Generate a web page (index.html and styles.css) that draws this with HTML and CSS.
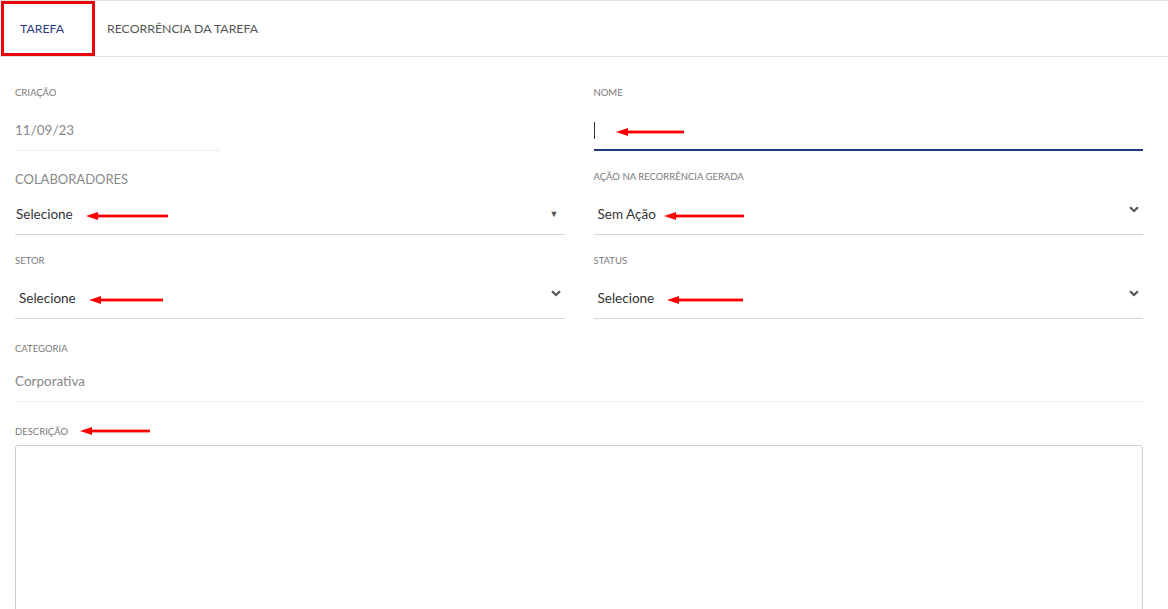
FILE: index.html
```html
<!DOCTYPE html>
<html lang="pt-BR">
<head>
<meta charset="UTF-8">
<title>Tarefa</title>
<link rel="stylesheet" href="styles.css">
</head>
<body>

<div class="tabs">
    <div class="tab active">TAREFA</div>
    <div class="tab">RECORRÊNCIA DA TAREFA</div>
</div>

<form class="form">
    <div class="field">
        <label class="label">CRIAÇÃO</label>
        <div class="control static short">11/09/23</div>
    </div>
    <div class="field">
        <label class="label">NOME</label>
        <div class="control focused">
            <span class="caret"></span>
            <svg class="mark" width="68" height="10" viewBox="0 0 68 10"><path d="M0 5 L12 1 L12 9 Z" fill="#f00"/><rect x="10" y="3.6" width="58" height="2.8" fill="#f00"/></svg>
        </div>
    </div>

    <div class="field">
        <label class="label big">COLABORADORES</label>
        <div class="control select">
            <span class="value">Selecione</span>
            <svg class="mark" width="82" height="10" viewBox="0 0 82 10"><path d="M0 5 L12 1 L12 9 Z" fill="#f00"/><rect x="10" y="3.6" width="72" height="2.8" fill="#f00"/></svg>
            <span class="tri">▼</span>
        </div>
    </div>
    <div class="field">
        <label class="label">AÇÃO NA RECORRÊNCIA GERADA</label>
        <div class="control select indent">
            <span class="value">Sem Ação</span>
            <svg class="mark near" width="80" height="10" viewBox="0 0 80 10"><path d="M0 5 L12 1 L12 9 Z" fill="#f00"/><rect x="10" y="3.6" width="70" height="2.8" fill="#f00"/></svg>
            <svg class="chev" width="10" height="7" viewBox="0 0 10 7"><path d="M1 1.2 L5 5 L9 1.2" fill="none" stroke="#555" stroke-width="2.2"/></svg>
        </div>
    </div>

    <div class="field">
        <label class="label">SETOR</label>
        <div class="control select indent">
            <span class="value">Selecione</span>
            <svg class="mark" width="74" height="10" viewBox="0 0 74 10"><path d="M0 5 L12 1 L12 9 Z" fill="#f00"/><rect x="10" y="3.6" width="64" height="2.8" fill="#f00"/></svg>
            <svg class="chev" width="10" height="7" viewBox="0 0 10 7"><path d="M1 1.2 L5 5 L9 1.2" fill="none" stroke="#555" stroke-width="2.2"/></svg>
        </div>
    </div>
    <div class="field">
        <label class="label">STATUS</label>
        <div class="control select indent">
            <span class="value">Selecione</span>
            <svg class="mark" width="76" height="10" viewBox="0 0 76 10"><path d="M0 5 L12 1 L12 9 Z" fill="#f00"/><rect x="10" y="3.6" width="66" height="2.8" fill="#f00"/></svg>
            <svg class="chev" width="10" height="7" viewBox="0 0 10 7"><path d="M1 1.2 L5 5 L9 1.2" fill="none" stroke="#555" stroke-width="2.2"/></svg>
        </div>
    </div>

    <div class="field wide category">
        <label class="label">CATEGORIA</label>
        <div class="control static">Corporativa</div>
    </div>

    <div class="field wide description">
        <label class="label">DESCRIÇÃO
            <svg class="mark" width="70" height="10" viewBox="0 0 70 10"><path d="M0 5 L12 1 L12 9 Z" fill="#f00"/><rect x="10" y="3.6" width="60" height="2.8" fill="#f00"/></svg>
        </label>
        <textarea class="textarea"></textarea>
    </div>
</form>

</body>
</html>
```

FILE: styles.css
```css
    :root {
        --line: #d4d4d4;
        --line-soft: #ececec;
        --label: #7a7a7a;
        --text: #333;
        --primary: #1f3b7c;
    }

    body {
        margin: 0;
        background: #fff;
        font-family: Lato, 'Noto Sans', sans-serif;
        color: var(--text);
        border-top: 1px solid #e2e2e2;
        overflow: hidden;
    }

    .tabs {
        display: flex;
        align-items: stretch;
        height: 55px;
        border-bottom: 1px solid #ddd;
    }

    .tab {
        display: flex;
        align-items: center;
        padding: 0 12px;
        font-size: 12.3px;
        color: #555;
    }

    .tab.active {
        box-sizing: border-box;
        width: 94px;
        margin-left: 1px;
        padding-left: 16px;
        border: 3px solid #e8070b;
        color: #2e3d87;
    }

    .form {
        display: grid;
        grid-template-columns: 1fr 1fr;
        column-gap: 29px;
        padding: 28px 25px 0 15px;
    }

    .field {
        display: flex;
        flex-direction: column;
        margin-bottom: 18px;
    }

    .label {
        display: flex;
        align-items: center;
        gap: 12px;
        height: 14px;
        margin-bottom: 12px;
        font-size: 9.5px;
        color: var(--label);
    }

    .label.big {
        margin-top: 3px;
        margin-bottom: 9px;
        font-size: 13px;
        color: #888;
    }

    .control {
        box-sizing: border-box;
        display: flex;
        align-items: center;
        height: 40px;
        padding-bottom: 2px;
        border-bottom: 1px solid var(--line);
        font-size: 13.5px;
    }

    .control.static {
        color: #888;
        border-bottom-color: var(--line-soft);
    }

    .control.short {
        width: 205px;
    }

    .control.focused {
        border-bottom: 2px solid var(--primary);
        padding-top: 2px;
    }

    .caret {
        width: 1px;
        height: 17px;
        background: #333;
        margin-right: 8px;
    }

    .select .value {
        color: var(--text);
        padding-left: 1px;
    }

    .select.indent .value {
        padding-left: 4px;
    }

    .mark {
        margin-left: 13px;
        margin-top: 4px;
    }

    .mark.near {
        margin-left: 8px;
    }

    .select .tri {
        margin-left: auto;
        margin-right: 6px;
        font-size: 9px;
        color: #555;
    }

    .select .chev {
        margin-left: auto;
        margin-right: 4px;
        margin-bottom: 9px;
    }

    .wide {
        grid-column: 1 / -1;
    }

    .category {
        margin-top: 4px;
        margin-bottom: 22px;
    }

    .category .label {
        margin-bottom: 7px;
    }

    .description .label {
        margin-bottom: 7px;
    }

    .description .mark {
        margin-left: 0;
        margin-top: 0;
    }

    .textarea {
        box-sizing: border-box;
        width: 100%;
        height: 200px;
        border: 1px solid #cfcfcf;
        border-radius: 3px;
        resize: none;
        outline: none;
        font-family: inherit;
    }
```
